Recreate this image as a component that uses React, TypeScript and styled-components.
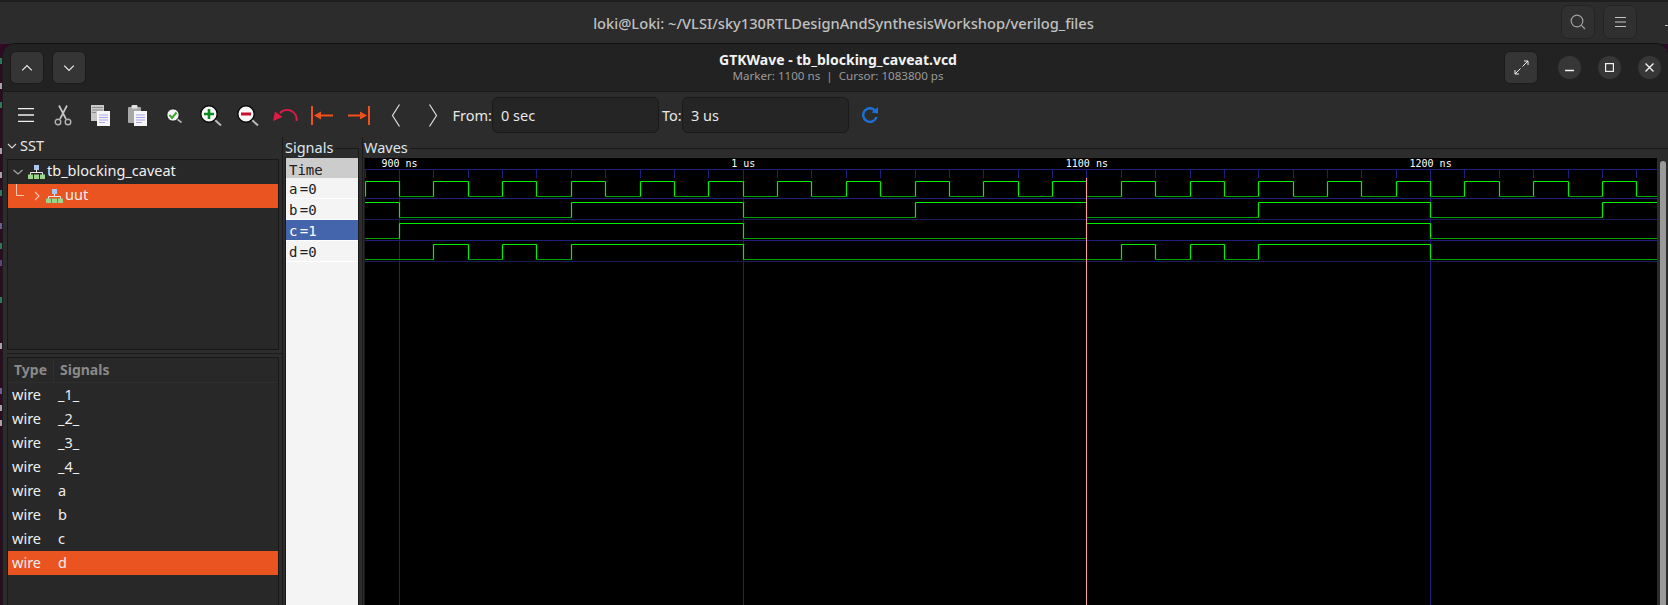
import React from "react";
import styled, { createGlobalStyle } from "styled-components";

const UI_FONT = `"Noto Sans", "Open Sans", sans-serif`;
const MONO_FONT = `"DejaVu Sans Mono", "Liberation Mono", monospace`;
const ACCENT = "#e95420";

const Global = createGlobalStyle`
  html, body { margin: 0; padding: 0; height: 605px; overflow: hidden; background: #300a24; }
  #root { height: 605px; }
  * { box-sizing: border-box; }
`;

const Page = styled.div`
  width: 1668px;
  height: 605px;
  display: flex;
  flex-direction: column;
  overflow: hidden;
  font-family: ${UI_FONT};
  color: #f0f0f0;
`;

const TerminalBar = styled.header`
  flex: 0 0 44px;
  display: flex;
  align-items: center;
  background: #2c2c2c;
  border-top: 2px solid #1e1e1e;
  padding-bottom: 2px;
`;
const TerminalTitle = styled.div`
  flex: 1;
  text-align: center;
  padding-left: 134px;
  padding-right: 8px;
  padding-top: 2px;
  font-size: 14.65px;
  font-weight: 500;
  color: #c0c0c0;
`;
const TerminalButton = styled.div`
  width: 34px;
  height: 34px;
  margin-right: 8px;
  border-radius: 7px;
  border: 1px solid #242424;
  background: #303030;
  display: flex;
  align-items: center;
  justify-content: center;
`;
const TerminalDash = styled.div`
  width: 3px;
  height: 1px;
  margin: 6px 0 0 20px;
  background: #bbb;
`;

const Desktop = styled.div`
  flex: 1;
  min-height: 0;
  display: flex;
  background: #300a24;
`;
const Sliver = styled.svg`
  flex: 0 0 3px;
  width: 3px;
  height: 561px;
`;
const GtkWindow = styled.main`
  flex: 1;
  min-width: 0;
  display: flex;
  flex-direction: column;
  background: #2c2c2c;
  border-radius: 12px 12px 0 0;
  box-shadow: 0 -1px 0 #111, -1px 0 0 #1a1a1a;
  overflow: hidden;
`;

const WindowHeader = styled.div`
  flex: 0 0 48px;
  display: grid;
  grid-template-columns: 1fr auto 1fr;
  align-items: center;
  padding: 0 7px;
  background: #222222;
  border-bottom: 1px solid #1a1a1a;
`;
const HeaderGroup = styled.div<{ $end?: boolean }>`
  display: flex;
  align-items: center;
  justify-content: ${(p) => (p.$end ? "flex-end" : "flex-start")};
  gap: 8px;
`;
const HeaderButton = styled.div`
  width: 34px;
  height: 33px;
  border-radius: 6px;
  border: 1px solid #1b1b1b;
  background: #353535;
  display: flex;
  align-items: center;
  justify-content: center;
`;
const ExpandButton = styled(HeaderButton)`
  margin-right: 3px;
`;
const CircleButton = styled.div`
  width: 23px;
  height: 23px;
  border-radius: 50%;
  background: #373737;
  display: flex;
  align-items: center;
  justify-content: center;
  margin-left: 9px;
`;
const TitleBlock = styled.div`
  text-align: center;
  padding-left: 5px;
  line-height: 16px;
`;
const TitleMain = styled.div`
  font-size: 14px;
  font-weight: 700;
  color: #f2f2f2;
`;
const TitleSub = styled.div`
  font-size: 11.6px;
  color: #9a9a9a;
`;

const Toolbar = styled.div`
  flex: 0 0 45px;
  display: flex;
  align-items: center;
  padding-left: 4.5px;
  padding-top: 1px;
`;
const ToolButton = styled.div`
  width: 37px;
  display: flex;
  align-items: center;
  justify-content: center;
`;
const ReloadButton = styled(ToolButton)`
  margin-left: 2px;
`;
const ToolLabel = styled.span<{ $w: number; $pad?: number }>`
  width: ${(p) => p.$w}px;
  font-size: 14.5px;
  color: #e8e8e8;
  padding-left: ${(p) => p.$pad ?? 1}px;
  white-space: nowrap;
`;
const Entry = styled.div`
  width: 167px;
  height: 36px;
  padding-left: 8px;
  display: flex;
  align-items: center;
  font-size: 14.5px;
  color: #e8e8e8;
  border: 1px solid #1a1a1a;
  border-radius: 6px;
  background: #252525;
`;

const Panes = styled.div`
  flex: 1;
  min-height: 0;
  display: flex;
`;
const LeftColumn = styled.aside`
  flex: 0 0 279px;
  display: flex;
  flex-direction: column;
  padding-left: 4px;
`;
const SstHeader = styled.div`
  flex: 0 0 22px;
  min-height: 0;
  display: flex;
  align-items: center;
  gap: 3px;
  font-size: 14.5px;
  line-height: 15px;
  color: #e8e8e8;
  padding-bottom: 5px;
`;
const TreeFrame = styled.div`
  flex: 0 0 191px;
  width: 272px;
  border: 1px solid #181818;
  background: #282828;
`;
const TreeRow = styled.div<{ $selected?: boolean }>`
  height: 24px;
  display: flex;
  align-items: center;
  font-size: 14.5px;
  color: #f0f0f0;
  background: ${(p) => (p.$selected ? ACCENT : "transparent")};
`;
const TreeLabel = styled.span`
  margin-left: 2px;
  padding-bottom: 4px;
`;
const RowGlyphs = styled.div<{ $w: number }>`
  flex: 0 0 ${(p) => p.$w}px;
  height: 24px;
`;
const PaneRule = styled.div`
  flex: 0 0 1px;
  margin: 3px 0;
  background: #1c1c1c;
`;
const SignalFrame = styled.div`
  flex: 1;
  width: 272px;
  border: 1px solid #181818;
  border-bottom: 0;
  background: #282828;
`;
const ColumnHead = styled.div`
  height: 25px;
  display: grid;
  grid-template-columns: 45px 1fr;
  align-items: center;
  font-size: 14px;
  font-weight: 700;
  color: #8a8a8a;
  border-bottom: 1px solid #2f2f2f;
`;
const HeadCell = styled.div<{ $divider?: boolean }>`
  padding-left: 6px;
  height: 24px;
  line-height: 23px;
  border-left: ${(p) => (p.$divider ? "1px solid #303030" : "0")};
`;
const SignalRow = styled.div<{ $selected?: boolean }>`
  height: 24px;
  display: grid;
  grid-template-columns: 46px 1fr;
  align-items: center;
  padding-left: 4px;
  padding-bottom: 2px;
  font-size: 14.5px;
  color: #eeeeee;
  background: ${(p) => (p.$selected ? ACCENT : "transparent")};
`;

const SignalsPane = styled.section`
  flex: 0 0 80px;
  display: flex;
  flex-direction: column;
  border-left: 1px solid #1a1a1a;
  padding: 11px 0 0 2px;
`;
const WavesPane = styled.section`
  flex: 1;
  min-width: 0;
  display: flex;
  flex-direction: column;
  border-left: 1px solid #1a1a1a;
  padding: 11px 0 0 1px;
`;
const FrameBox = styled.div<{ $width?: number }>`
  position: relative;
  flex: 1;
  min-height: 0;
  display: flex;
  flex-direction: column;
  width: ${(p) => (p.$width ? `${p.$width}px` : "auto")};
  border-top: 1px solid #1a1a1a;
  border-left: 1px solid #1a1a1a;
  border-right: ${(p) => (p.$width ? "1px solid #1a1a1a" : "0")};
  padding-top: 9px;
`;
const FrameLabel = styled.span`
  position: absolute;
  left: -1px;
  top: -11px;
  padding-right: 2px;
  background: #2c2c2c;
  font-size: 14.5px;
  line-height: 19px;
  color: #dfe6ee;
`;
const NameList = styled.div`
  flex: 1;
  background: #f4f4f4;
  font-family: ${MONO_FONT};
  font-size: 14px;
  color: #202020;
`;
const TimeRow = styled.div`
  height: 20px;
  line-height: 24px;
  padding-left: 3px;
  background: #cccccc;
`;
const NameRow = styled.div<{ $selected?: boolean }>`
  height: 21px;
  line-height: 23px;
  padding-left: 3px;
  word-spacing: -6px;
  white-space: pre;
  border-bottom: 1px solid #ffffff;
  background: ${(p) => (p.$selected ? "#4464ab" : "transparent")};
  color: ${(p) => (p.$selected ? "#ffffff" : "#202020")};
`;
const WaveArea = styled.div`
  flex: 1;
  min-height: 0;
  display: flex;
`;
const WaveCanvas = styled.svg`
  flex: 0 0 1292px;
  width: 1292px;
  height: 447px;
  background: #000;
  display: block;
`;
const Scrollbar = styled.div`
  flex: 1;
  padding: 3px 2px 0 3px;
  background: #2c2c2c;
`;
const ScrollThumb = styled.div`
  width: 6px;
  height: 460px;
  border-radius: 3px;
  background: #9a9a9a;
`;

/* ---------- drawings ---------- */
const Chevron = ({ dir, size = 10, color = "#c8c8c8" }: { dir: "up" | "down" | "right"; size?: number; color?: string }) => {
  const d = dir === "up" ? "M1 7 L5 3 L9 7" : dir === "down" ? "M1 3 L5 7 L9 3" : "M3 1 L7 5 L3 9";
  return (
    <svg width={size} height={size} viewBox="0 0 10 10" fill="none" stroke={color} strokeWidth="1.1">
      <path d={d} />
    </svg>
  );
};
const Burger = ({ w = 16, h = 14, color = "#eee", sw = 1.3 }: { w?: number; h?: number; color?: string; sw?: number }) => (
  <svg width={w} height={h} viewBox={`0 0 ${w} ${h}`} stroke={color} strokeWidth={sw}>
    <path d={`M0 ${sw / 2} H${w} M0 ${h / 2} H${w} M0 ${h - sw / 2} H${w}`} />
  </svg>
);
const Scissors = () => (
  <svg width="18" height="21" viewBox="0 0 18 21" fill="none">
    <path d="M6 14 L13 0.5 M12 14 L5 0.5" stroke="#c4c4c4" strokeWidth="1.7" />
    <circle cx="4" cy="17" r="2.8" stroke="#b0b0b0" strokeWidth="1.4" />
    <circle cx="14" cy="17" r="2.8" stroke="#b0b0b0" strokeWidth="1.4" />
  </svg>
);
const FrontPage = () => (
  <>
    <rect x="6" y="6" width="13" height="15" fill="#f6f6f6" />
    <path d="M8 10 H17 M8 12.5 H17 M8 15 H17 M8 17.5 H14" stroke="#a6a6e8" strokeWidth="1" />
  </>
);
const Copy = () => (
  <svg width="19" height="21" viewBox="0 0 19 21">
    <rect x="0" y="0" width="13" height="16" fill="#c8c8c8" />
    <path d="M1 2.5 H12 M1 5 H12 M1 7.5 H5" stroke="#8c8c8c" strokeWidth="1" />
    <FrontPage />
  </svg>
);
const Paste = () => (
  <svg width="19" height="21" viewBox="0 0 19 21">
    <rect x="0" y="2" width="13" height="16" rx="1" fill="#a8a8a8" />
    <rect x="3.5" y="0" width="6" height="3.5" rx="1" fill="#e2e2e2" />
    <FrontPage />
  </svg>
);
const CheckLens = () => (
  <svg width="17" height="15" viewBox="0 0 17 15" fill="none">
    <path d="M11 11 L15.5 14.5" stroke="#b8b8b8" strokeWidth="1.6" />
    <circle cx="7" cy="7" r="6.2" fill="#f4f4f4" stroke="#111" strokeWidth="1" />
    <path d="M3.5 7 L6 10 L10.5 4.5" stroke="#3fa52e" strokeWidth="2" />
  </svg>
);
const ZoomLens = ({ plus }: { plus?: boolean }) => (
  <svg width="23" height="21" viewBox="0 0 23 21" fill="none">
    <path d="M15 15 L21 20.5" stroke="#b8b8b8" strokeWidth="2" />
    <circle cx="9" cy="9" r="8.2" fill="#f8f8f8" stroke="#0a0a0a" strokeWidth="1.4" />
    {plus ? (
      <path d="M9 4 V14 M4 9 H14" stroke="#0d8a1e" strokeWidth="2.6" />
    ) : (
      <path d="M4 9 H14" stroke="#c8102e" strokeWidth="2.8" />
    )}
  </svg>
);
const Undo = () => (
  <svg width="25" height="14" viewBox="0 0 25 14" fill="none">
    <path d="M23.5 13 A 9.6 9.6 0 0 0 7 5" stroke="#e01b45" strokeWidth="2" />
    <path d="M0 13 L2 3.5 L9.5 9 Z" fill="#e01b45" />
  </svg>
);
const Stop = ({ flip }: { flip?: boolean }) => (
  <svg width="22" height="19" viewBox="0 0 22 19">
    <g transform={flip ? "translate(22 0) scale(-1 1)" : undefined}>
      <rect x="0" y="0" width="2" height="19" fill="#f0501a" />
      <path d="M3 9.5 L10 5.5 V8.4 H22 V10.6 H10 V13.5 Z" fill="#f0501a" />
    </g>
  </svg>
);
const LongChevron = ({ flip }: { flip?: boolean }) => (
  <svg width="10" height="23" viewBox="0 0 10 23" fill="none" stroke="#dedede" strokeWidth="1.2">
    <path d={flip ? "M1.5 0.5 L8.5 11.5 L1.5 22.5" : "M8.5 0.5 L1.5 11.5 L8.5 22.5"} />
  </svg>
);
const Reload = () => (
  <svg width="18" height="17" viewBox="0 0 18 17" fill="none">
    <path d="M14.5 4 A 6.8 6.8 0 1 0 15.5 10" stroke="#1c71d8" strokeWidth="2.4" />
    <path d="M10.5 5.5 L17 6.5 L17 0 Z" fill="#1c71d8" />
  </svg>
);
const Hierarchy = () => (
  <svg width="17" height="14" viewBox="0 0 17 14">
    <rect x="6" y="0" width="5" height="5" fill="#a8c8ee" />
    <path d="M8.5 5 V8 M2.5 10 V7.5 H14.5 V10" stroke="#e8e8e8" strokeWidth="1" fill="none" />
    <rect x="0" y="9.5" width="5" height="4.5" fill="#9bd58a" />
    <rect x="6" y="9.5" width="5" height="4.5" fill="#9bd58a" />
    <rect x="12" y="9.5" width="5" height="4.5" fill="#9bd58a" />
  </svg>
);

/* ---------- wave data ---------- */
const X0 = 399.5 - 365;
const STEP = 34.37;
const xAt = (k: number) => X0 + k * STEP;
const WIDTH = 1292;
const range = (a: number, b: number) => Array.from({ length: b - a + 1 }, (_, i) => a + i);

type Sig = { top: number; start: 0 | 1; edges: number[] };
const SIGNALS: Sig[] = [
  { top: 23, start: 0, edges: range(-1, 36) },
  { top: 44, start: 1, edges: [0, 5, 10, 15, 20, 25, 30, 35] },
  { top: 65, start: 0, edges: [0, 10, 20, 30] },
  { top: 86, start: 0, edges: [1, 2, 3, 4, 5, 10, 21, 22, 23, 24, 25, 30] },
];
const SEPARATORS = [
  { y: 40, c: "#20207c" },
  { y: 61, c: "#1b1b5c" },
  { y: 82, c: "#20207c" },
  { y: 103, c: "#1b1b5c" },
];
const MAJORS = [
  { k: 0, label: "900 ns" },
  { k: 10, label: "1 us" },
  { k: 20, label: "1100 ns" },
  { k: 30, label: "1200 ns" },
];
const snap = (x: number) => Math.floor(x) + 0.5;
const HIGH = "#00f000";
const LOW = "#00a400";
const H = 15;

const Trace = ({ s }: { s: Sig }) => {
  const parts: React.ReactNode[] = [];
  let v: number = s.start;
  let from = 0;
  const hi = s.top + 0.5;
  const lo = s.top + H + 0.5;
  const flat = (a: number, b: number, val: number, key: string) => (
    <line key={key} x1={a} x2={b} y1={val ? hi : lo} y2={val ? hi : lo} stroke={val ? HIGH : LOW} strokeWidth="1.2" />
  );
  s.edges.forEach((k) => {
    const x = Math.min(snap(xAt(k)), WIDTH);
    if (x >= WIDTH) return;
    parts.push(flat(from, x, v, `h${k}`));
    parts.push(<line key={`v${k}`} x1={x} x2={x} y1={hi} y2={lo} stroke={HIGH} strokeWidth="1.2" />);
    v = v ? 0 : 1;
    from = x;
  });
  parts.push(flat(from, WIDTH, v, "end"));
  return <g>{parts}</g>;
};

const Waves = () => (
  <WaveCanvas viewBox={`0 0 ${WIDTH} 447`} aria-label="waveforms">
    <line x1="0" x2={WIDTH} y1="11.5" y2="11.5" stroke="#20207c" />
    {range(-1, 37).map((k) =>
      xAt(k) < WIDTH ? (
        <line key={k} x1={snap(xAt(k))} x2={snap(xAt(k))} y1="11" y2="20" stroke="#20207c" />
      ) : null
    )}
    {MAJORS.map((m) => (
      <line key={m.k} x1={snap(xAt(m.k))} x2={snap(xAt(m.k))} y1="11" y2="447" stroke="#20207c" />
    ))}
    {SEPARATORS.map((s) => (
      <line key={s.y} x1="0" x2={WIDTH} y1={s.y + 0.5} y2={s.y + 0.5} stroke={s.c} />
    ))}
    {SIGNALS.map((s) => (
      <Trace key={s.top} s={s} />
    ))}
    <line x1={snap(xAt(20))} x2={snap(xAt(20))} y1="20" y2="447" stroke="#ffa0a0" />
    {MAJORS.map((m) => (
      <text key={m.label} x={xAt(m.k)} y="9" textAnchor="middle" fontFamily={MONO_FONT} fontSize="10" fill="#ffffff">
        {m.label}
      </text>
    ))}
  </WaveCanvas>
);

const SLIVER_MARKS: [number, string][] = [
  [14, "#2f9e6e"], [39, "#d8d0d8"], [58, "#2f9e6e"], [104, "#d8d0d8"], [128, "#d8d0d8"],
  [146, "#2f9e6e"], [179, "#8878b8"], [199, "#2f9e6e"], [216, "#6a5a98"], [253, "#2f9e6e"],
  [299, "#d8d0d8"], [344, "#8878b8"], [361, "#d8d0d8"], [376, "#d8d0d8"],
];
const SIGNAL_TYPES = ["_1_", "_2_", "_3_", "_4_", "a", "b", "c", "d"];

export default function App() {
  return (
    <>
      <Global />
      <Page>
        <TerminalBar>
          <TerminalTitle>loki@Loki: ~/VLSI/sky130RTLDesignAndSynthesisWorkshop/verilog_files</TerminalTitle>
          <TerminalButton>
            <svg width="16" height="16" viewBox="0 0 16 16" fill="none" stroke="#a0a0a0" strokeWidth="1.2">
              <circle cx="7" cy="7" r="5.8" />
              <path d="M11.2 11.2 L15 15" />
            </svg>
          </TerminalButton>
          <TerminalButton>
            <Burger w={11} h={10} color="#c4c4c4" sw={1} />
          </TerminalButton>
          <TerminalDash />
        </TerminalBar>
        <Desktop>
          <Sliver viewBox="0 0 3 561">
            {SLIVER_MARKS.map(([y, c]) => (
              <rect key={y} x="0" y={y} width="2" height="6" fill={c} opacity="0.75" />
            ))}
          </Sliver>
          <GtkWindow>
            <WindowHeader>
              <HeaderGroup>
                <HeaderButton>
                  <Chevron dir="up" size={12} color="#e4e4e4" />
                </HeaderButton>
                <HeaderButton>
                  <Chevron dir="down" size={12} color="#e4e4e4" />
                </HeaderButton>
              </HeaderGroup>
              <TitleBlock>
                <TitleMain>GTKWave - tb_blocking_caveat.vcd</TitleMain>
                <TitleSub>Marker: 1100 ns&nbsp; | &nbsp;Cursor: 1083800 ps</TitleSub>
              </TitleBlock>
              <HeaderGroup $end>
                <ExpandButton>
                  <svg width="15" height="15" viewBox="0 0 15 15" fill="none" stroke="#f0f0f0" strokeWidth="1">
                    <path d="M8.5 6.5 L14 1 M10 1 H14 V5 M6.5 8.5 L1 14 M1 10 V14 H5" />
                  </svg>
                </ExpandButton>
                <CircleButton>
                  <svg width="9" height="9" viewBox="0 0 9 9" stroke="#f0f0f0" strokeWidth="1.3">
                    <path d="M0 7.5 H9" />
                  </svg>
                </CircleButton>
                <CircleButton>
                  <svg width="9" height="9" viewBox="0 0 9 9" fill="none" stroke="#f0f0f0" strokeWidth="1.2">
                    <rect x="0.6" y="0.6" width="7.8" height="7.8" />
                  </svg>
                </CircleButton>
                <CircleButton>
                  <svg width="9" height="9" viewBox="0 0 9 9" stroke="#f0f0f0" strokeWidth="1.4">
                    <path d="M0.5 0.5 L8.5 8.5 M8.5 0.5 L0.5 8.5" />
                  </svg>
                </CircleButton>
              </HeaderGroup>
            </WindowHeader>
            <Toolbar>
              <ToolButton><Burger /></ToolButton>
              <ToolButton><Scissors /></ToolButton>
              <ToolButton><Copy /></ToolButton>
              <ToolButton><Paste /></ToolButton>
              <ToolButton><CheckLens /></ToolButton>
              <ToolButton><ZoomLens plus /></ToolButton>
              <ToolButton><ZoomLens /></ToolButton>
              <ToolButton><Undo /></ToolButton>
              <ToolButton><Stop /></ToolButton>
              <ToolButton><Stop flip /></ToolButton>
              <ToolButton><LongChevron /></ToolButton>
              <ToolButton><LongChevron flip /></ToolButton>
              <ToolLabel $w={40.5}>From:</ToolLabel>
              <Entry>0 sec</Entry>
              <ToolLabel $w={23} $pad={3}>To:</ToolLabel>
              <Entry>3 us</Entry>
              <ReloadButton><Reload /></ReloadButton>
            </Toolbar>
            <Panes>
              <LeftColumn>
                <SstHeader>
                  <Chevron dir="down" size={10} color="#d8d8d8" />
                  SST
                </SstHeader>
                <TreeFrame>
                  <TreeRow>
                    <RowGlyphs $w={20}>
                      <svg width="20" height="24" viewBox="0 0 20 24">
                        <path d="M5.5 10 L10 14 L14.5 10" fill="none" stroke="#aaaaaa" strokeWidth="1.1" />
                      </svg>
                    </RowGlyphs>
                    <Hierarchy />
                    <TreeLabel>tb_blocking_caveat</TreeLabel>
                  </TreeRow>
                  <TreeRow $selected>
                    <RowGlyphs $w={38}>
                      <svg width="38" height="24" viewBox="0 0 38 24" fill="none">
                        <path d="M8.5 0 V11.5 H16" stroke="#f8c8b4" strokeWidth="1" />
                        <path d="M27 8 L31 12 L27 16" stroke="#f8c8b4" strokeWidth="1.1" />
                      </svg>
                    </RowGlyphs>
                    <Hierarchy />
                    <TreeLabel>uut</TreeLabel>
                  </TreeRow>
                </TreeFrame>
                <PaneRule />
                <SignalFrame>
                  <ColumnHead>
                    <HeadCell>Type</HeadCell>
                    <HeadCell $divider>Signals</HeadCell>
                  </ColumnHead>
                  {SIGNAL_TYPES.map((n) => (
                    <SignalRow key={n} $selected={n === "d"}>
                      <span>wire</span>
                      <span>{n}</span>
                    </SignalRow>
                  ))}
                </SignalFrame>
              </LeftColumn>
              <SignalsPane>
                <FrameBox $width={74}>
                  <FrameLabel>Signals</FrameLabel>
                  <NameList>
                    <TimeRow>Time</TimeRow>
                    <NameRow>a =0</NameRow>
                    <NameRow>b =0</NameRow>
                    <NameRow $selected>c =1</NameRow>
                    <NameRow>d =0</NameRow>
                  </NameList>
                </FrameBox>
              </SignalsPane>
              <WavesPane>
                <FrameBox>
                  <FrameLabel>Waves</FrameLabel>
                  <WaveArea>
                    <Waves />
                    <Scrollbar>
                      <ScrollThumb />
                    </Scrollbar>
                  </WaveArea>
                </FrameBox>
              </WavesPane>
            </Panes>
          </GtkWindow>
        </Desktop>
      </Page>
    </>
  );
}
